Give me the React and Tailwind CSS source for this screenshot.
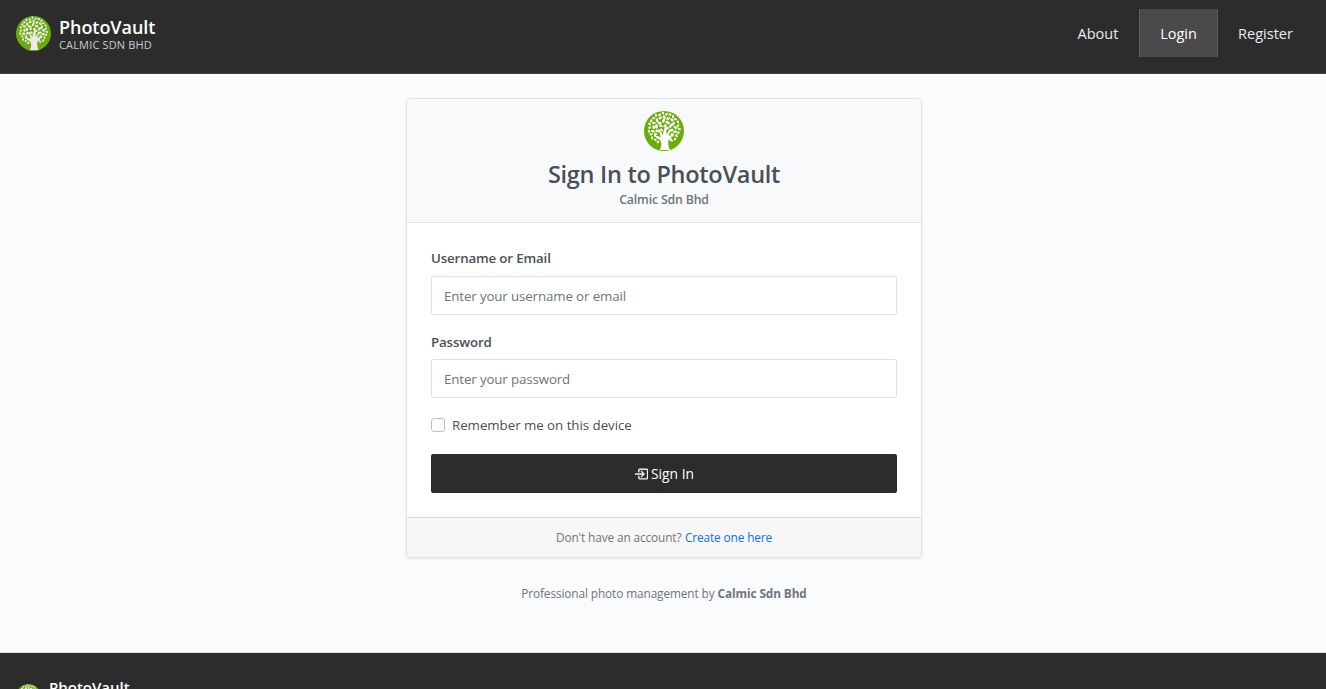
import React from "react";
import { BsBoxArrowInRight } from "react-icons/bs";

const rings = [
  { r: 3.3, n: 5, rx: 1.9, ry: 1.1 },
  { r: 7.2, n: 10, rx: 2.3, ry: 1.4 },
  { r: 11, n: 17, rx: 2, ry: 1.3 },
  { r: 14.8, n: 26, rx: 1.6, ry: 1.1 },
];

const leaves = rings.flatMap((ring, k) =>
  Array.from({ length: ring.n }, (_, i) => {
    const a = ((i + k * 0.4) / ring.n) * Math.PI * 2;
    const wobble = Math.sin(i * 2.7 + k) * 0.6;
    return {
      x: 20 + Math.cos(a) * (ring.r + wobble),
      y: 17.3 + Math.sin(a) * (ring.r + wobble),
      rx: ring.rx,
      ry: ring.ry,
      rot: (a * 180) / Math.PI + (i % 3) * 55 - 30,
    };
  })
).filter((l) => !(l.y > 20 && Math.abs(l.x - 20) < 4.5) && l.y < 31);

function TreeLogo({ className }) {
  return (
    <svg viewBox="0 0 40 40" className={className} aria-hidden="true">
      <circle cx="20" cy="20" r="20" fill="#6bab0b" />
      <g fill="currentColor">
        {leaves.map((l, i) => (
          <ellipse key={i} cx={l.x} cy={l.y} rx={l.rx} ry={l.ry} transform={`rotate(${l.rot} ${l.x} ${l.y})`} />
        ))}
        <path d="M15.4 38.9c1.5-1.4 1.9-3.6 1.9-6.2 0-3.3-2-5-7.3-7.6l.5-1c3 .9 4.8 1.8 6.1 2.5-.3-2.6-1.1-5-2.3-7.9l1.3-.5c1.5 2.3 2.3 4 2.9 6 .7-2.8 1.8-5.3 2.6-10.2h1.6c-.2 4.2-.5 7-.1 9.6 1.2-2.3 2-3.8 3.2-5.8l1.2.6c-1.2 2.7-2 4.7-2.4 6.8 1.5-1 3.2-1.8 5.3-2.4l.5 1c-4.6 2.5-6.1 4.5-6.1 7.7 0 3.4.4 5.9 2 7.4z" />
      </g>
    </svg>
  );
}

function Field({ id, label, type, placeholder, gap }) {
  return (
    <div className={`flex flex-col ${gap}`}>
      <label htmlFor={id} className="h-[21px] text-[13.3px] leading-[22px] font-semibold tracking-[-0.15px] text-[#495057]">
        {label}
      </label>
      <input
        id={id}
        type={type}
        placeholder={placeholder}
        className="h-[39px] w-full rounded-[2px] border border-[#dee2e6] bg-white px-3 pt-px text-[13.3px] tracking-[-0.12px] text-[#495057] placeholder:text-[#6c757d]"
      />
    </div>
  );
}

export default function App() {
  return (
    <div className="h-[689px] overflow-hidden bg-[#fafbfd] font-['Open_Sans','Noto_Sans',sans-serif] text-[#495057]">
      <header className="flex h-[74px] items-start justify-between border-b border-[#404040] bg-[#2c2c2c] px-4">
        <a className="mt-4 flex gap-2">
          <TreeLogo className="size-[35px] text-[#ebebeb]" />
          <span className="flex flex-col whitespace-nowrap">
            <span className="h-[22px] text-[18px] leading-[22px] font-semibold tracking-[-0.05px] text-white">PhotoVault</span>
            <span className="text-[11px] leading-[14px] tracking-[0.16px] text-[#c8ccd0]">CALMIC SDN BHD</span>
          </span>
        </a>
        <nav className="mt-[9px] mr-[-3px] flex h-12 text-[14.5px] leading-[49px] text-[#e9ecef]">
          <a className="w-[82px] text-center">About</a>
          <a className="w-[79px] border-x border-[#5a5a5a] bg-[#4a4a4a] text-center text-white">Login</a>
          <a className="w-[95px] text-center">Register</a>
        </nav>
      </header>

      <main className="flex h-[579px] flex-col items-center border-b border-[#dee2e6] pt-6 pl-[2px]">
        <section className="flex h-[460px] w-[516px] flex-col overflow-hidden rounded-[4px] border border-[#dee2e6] bg-white shadow-[0_1px_3px_rgba(0,0,0,0.08)]">
          <div className="flex h-[124px] shrink-0 flex-col items-center border-b border-[#dee2e6] bg-[#f8f9fb] pt-3">
            <TreeLogo className="size-10 shrink-0 text-white" />
            <h1 className="mt-2 text-[23.5px] leading-[31px] font-semibold tracking-[-0.27px]">Sign In to PhotoVault</h1>
            <p className="text-[12.3px] leading-[20px] font-semibold tracking-[-0.15px] text-[#6c757d]">Calmic Sdn Bhd</p>
          </div>
          <form className="flex flex-1 flex-col px-6 pt-6">
            <Field id="user" label="Username or Email" type="text" placeholder="Enter your username or email" gap="mb-4 gap-2" />
            <Field id="password" label="Password" type="password" placeholder="Enter your password" gap="mb-[17px] gap-[7px]" />
            <label className="flex h-5 items-center gap-[7px] text-[13.3px] tracking-[-0.03px]">
              <input type="checkbox" className="size-[14px] appearance-none rounded-[3px] border border-[#bfbfbf] bg-white" />
              <span className="pt-[2px]">Remember me on this device</span>
            </label>
            <button type="button" className="mt-[19px] flex h-[39px] items-center justify-center gap-[3px] rounded-[2px] bg-[#2c2c2c] pt-px text-[13.8px] font-medium text-white">
              <BsBoxArrowInRight className="-mt-px size-[14px]" strokeWidth={0.5} />
              <span>Sign In</span>
            </button>
          </form>
          <div className="flex h-10 shrink-0 items-center justify-center gap-[3.5px] border-t border-[#d5d7d9] bg-[#f7f7f7] pt-px text-[11.8px] tracking-[-0.1px] text-[#6c757d]">
            <span>Don't have an account?</span>
            <a className="text-[#0d6efd]">Create one here</a>
          </div>
        </section>
        <p className="mt-[25px] text-[11.8px] leading-[21px] tracking-[-0.09px] text-[#6c757d]">
          Professional photo management by <strong className="font-bold">Calmic Sdn Bhd</strong>
        </p>
      </main>

      <footer className="flex h-60 gap-2 bg-[#2c2c2c] px-4 pt-6">
        <TreeLogo className="mt-[7px] size-[25px] text-[#ebebeb]" />
        <span className="text-[15px] leading-5 font-semibold text-white">PhotoVault</span>
      </footer>
    </div>
  );
}
